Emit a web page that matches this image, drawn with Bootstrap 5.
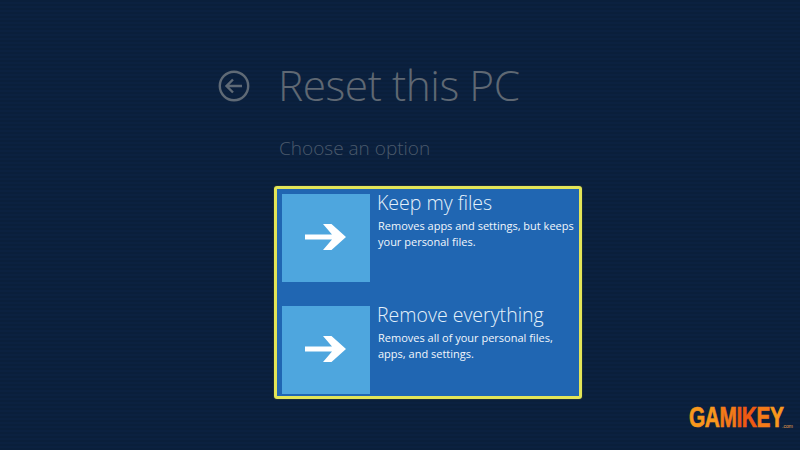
<!DOCTYPE html>
<html lang="en">
<head>
<meta charset="utf-8">
<title>Reset this PC</title>
<link href="https://cdn.jsdelivr.net/npm/bootstrap@5.3.0/dist/css/bootstrap.min.css" rel="stylesheet">
<style>
html,body{width:800px;height:450px;overflow:hidden}
body{background:repeating-linear-gradient(#0a1f3b 0 2px,#0b2140 2px 4px);font-family:"Open Sans","Noto Sans","Liberation Sans",sans-serif;position:relative;padding:61px 0 0 218px}
.back-ico{width:32px;height:32px;margin-top:9px;margin-right:28px;flex:none}
.page-title{font-size:42.400px;font-weight:300;line-height:48px;color:#5f6873;margin:0;letter-spacing:-.45px}
.page-sub{font-size:19px;font-weight:300;line-height:26px;color:#4a5a6c;margin:26px 0 0 61px}
.opt-box{width:308px;height:213px;margin:25px 0 0 56px;background:#2066b2;border:3px solid #e3e557;border-radius:3px;padding:5px;gap:24px;box-shadow:0 0 0 1px #1c2c3a}
.opt-row{height:88px;gap:7px}
.opt-tile{width:88px;height:88px;flex:none;background:#4ea6de;padding-bottom:2px}
.opt-name{font-size:19.500px;font-weight:300;line-height:22px;color:#e6f2fb;margin:-2px 0 0 0;white-space:nowrap}
.opt-desc{font-size:11px;line-height:16px;color:#f2f7fc;margin:4px 0 0 1px;white-space:nowrap}
.brand-mark{position:absolute;left:689px;top:400px;font-family:"Liberation Sans",sans-serif;font-weight:700;font-size:29px;line-height:34px;letter-spacing:-.6px;white-space:nowrap;transform:scaleX(.72);transform-origin:left center;color:#f8981d;-webkit-text-stroke:.7px currentColor}
.brand-hot{color:#ee5a12}
.brand-mid{color:#f47a18}
.brand-tld{position:absolute;left:782px;top:423px;font-family:"Liberation Sans",sans-serif;font-size:5px;line-height:6px;color:#e8a04a}
</style>
</head>
<body>
<div class="d-flex align-items-start">
  <svg class="back-ico" viewBox="0 0 32 32" fill="none" stroke="#5f6a76" stroke-width="2.4">
    <circle cx="16" cy="16" r="14.2"/>
    <path d="M24 16H9M15 9.500 8.500 16l6.500 6.500"/>
  </svg>
  <h1 class="page-title">Reset this PC</h1>
</div>
<p class="page-sub">Choose an option</p>
<div class="opt-box d-flex flex-column">
  <div class="opt-row d-flex">
    <div class="opt-tile d-flex align-items-center justify-content-center">
      <svg width="44" height="32" viewBox="0 0 44 32" fill="#fff"><path d="M1 13.500H28L19 3h8.500L42 16 27.500 29H19l9-10.500H1z"/></svg>
    </div>
    <div>
      <div class="opt-name">Keep my files</div>
      <div class="opt-desc">Removes apps and settings, but keeps<br>your personal files.</div>
    </div>
  </div>
  <div class="opt-row d-flex">
    <div class="opt-tile d-flex align-items-center justify-content-center">
      <svg width="44" height="32" viewBox="0 0 44 32" fill="#fff"><path d="M1 13.500H28L19 3h8.500L42 16 27.500 29H19l9-10.500H1z"/></svg>
    </div>
    <div>
      <div class="opt-name">Remove everything</div>
      <div class="opt-desc">Removes all of your personal files,<br>apps, and settings.</div>
    </div>
  </div>
</div>
<div class="brand-mark">GA<span class="brand-mid">M</span><span class="brand-hot">IK</span><span class="brand-mid">E</span>Y</div>
<div class="brand-tld">.com</div>
<script src="https://cdn.jsdelivr.net/npm/bootstrap@5.3.0/dist/js/bootstrap.bundle.min.js"></script>
</body>
</html>
